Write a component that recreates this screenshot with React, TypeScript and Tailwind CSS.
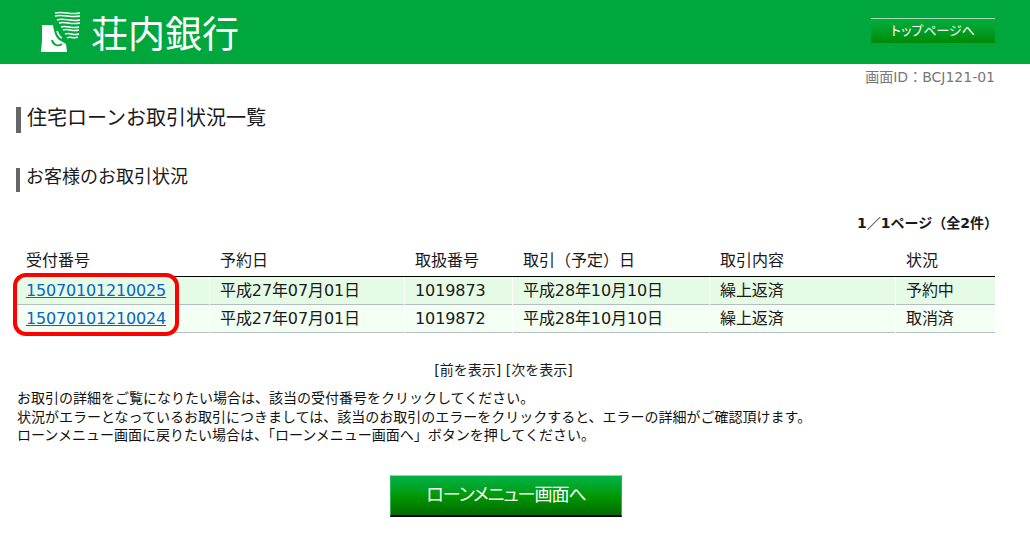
import React from "react";

const cols = "grid grid-cols-[192px_194px_107px_196px_185px_99px] gap-x-[1px] w-[978px]";
const rows = [
  ["15070101210025", "平成27年07月01日", "1019873", "平成28年10月10日", "繰上返済", "予約中"],
  ["15070101210024", "平成27年07月01日", "1019872", "平成28年10月10日", "繰上返済", "取消済"],
];
const heads = ["受付番号", "予約日", "取扱番号", "取引（予定）日", "取引内容", "状況"];
const pads = ["pl-[9px]", "pl-[10px]", "pl-[10px]", "pl-[10px]", "pl-[10px]", "pl-[10px]"];

function Logo() {
  return (
    <svg width="42" height="44" viewBox="0 0 42 44" className="shrink-0">
      <path d="M1 15H12C13 22 15 29 20 31L25 34L26 42H0L1 30Z" fill="#fff" />
      <path d="M11 30C12 35 17 37 21 34" fill="none" stroke="#00a73c" strokeWidth="1.8" />
      <path d="M16 21C17 24 18 27 21 28" fill="none" stroke="#fff" strokeWidth="1.8" />
      <g fill="none" stroke="#fff" strokeWidth="1.5">
        <path d="M14 3C22 1 30 5 39 3" />
        <path d="M14 6C22 4 30 8 39 6" />
        <path d="M16 10C22 7 30 12 39 10" />
        <path d="M18 13C24 11 30 15 39 13" />
        <path d="M20 17C25 15 31 19 38 17" />
        <path d="M22 20C27 18 31 22 38 20" />
        <path d="M24 24C28 22 32 26 38 24" />
        <path d="M26 28C29 26 33 29 37 27" />
      </g>
    </svg>
  );
}

export default function App() {
  return (
    <div className="w-[1030px] h-[538px] bg-white overflow-hidden text-[16px] leading-[20px] text-[#1a1a1a] font-['DejaVu_Sans','Noto_Sans_CJK_JP',sans-serif]">
      <header className="h-[64px] bg-[#00a73c] flex items-center justify-between pl-[41px] pr-[35px]">
        <div className="flex items-center gap-[8px]">
          <Logo />
          <span className="text-white text-[37px] leading-[44px] font-normal font-['Noto_Sans_CJK_JP',sans-serif]">荘内銀行</span>
        </div>
        <button className="w-[124px] h-[25px] mt-[-4px] border-t border-[#a9dcb6] bg-gradient-to-b from-[#00b03c] to-[#008a00] text-white text-[13px] leading-[20px] text-center [font-feature-settings:'palt']">
          トップページへ
        </button>
      </header>
      <main className="pl-[17px] pr-[17px]">
        <div className="text-right text-[#777] text-[14px] leading-[18px] mt-[4px] pr-[18px]">画面ID：BCJ121-01</div>
        <h1 className="mt-[21px] ml-[-1px] h-[26px] border-l-[5px] border-[#666] pl-[6px] text-[20px] leading-[22px] font-normal">住宅ローンお取引状況一覧</h1>
        <h2 className="mt-[35px] ml-[-1px] h-[24px] border-l-[4px] border-[#666] pl-[6px] text-[18px] leading-[18px] font-normal">お客様のお取引状況</h2>
        <div className="mt-[21px] text-right text-[14px] leading-[20px] font-bold pr-[15px]">1／1ページ（全2件）</div>
        <div className="relative mt-[11px] w-[978px]">
          <div className={`${cols} h-[33px] border-b border-black`}>
            {heads.map((h, j) => (
              <div key={h} className={`${pads[j]} pt-[7px]`}>{h}</div>
            ))}
          </div>
          {rows.map((r, i) => (
            <div key={r[0]} className={`${cols} h-[28px]`}>
              {r.map((c, j) => (
                <div key={j} className={`${pads[j]} pt-[4px] border-b border-[#b5bdc4] tracking-[-0.1px] ${i === 0 ? "bg-[#e6fbe6]" : "bg-[#f3fff3]"}`}>
                  {j === 0 ? <a href="#" className="text-[#0d62c6] underline tracking-[-0.18px]">{c}</a> : c}
                </div>
              ))}
            </div>
          ))}
          <div className="absolute left-[-4px] top-[29px] w-[166px] h-[63px] border-[4px] border-[#ff0000] rounded-[13px]" />
        </div>
        <p className="mt-[27px] text-center text-[14px] leading-[20px] pr-[23px]">[前を表示] [次を表示]</p>
        <div className="mt-[9px] text-[14px] leading-[18.5px] text-[#111]">
          <p>お取引の詳細をご覧になりたい場合は、該当の受付番号をクリックしてください。</p>
          <p>状況がエラーとなっているお取引につきましては、該当のお取引のエラーをクリックすると、エラーの詳細がご確認頂けます。</p>
          <p>ローンメニュー画面に戻りたい場合は、「ローンメニュー画面へ」ボタンを押してください。</p>
        </div>
        <div className="mt-[30px] flex justify-center pr-[18px]">
          <button className="w-[232px] h-[42px] border border-[#33b05a] border-t-[#8fdca8] border-b-2 border-b-black bg-gradient-to-b from-[#00b343] via-[#009a00] to-[#006a00] text-white text-[18px] leading-[24px] tracking-[-1px] [font-feature-settings:'palt']">
            ローンメニュー画面へ
          </button>
        </div>
      </main>
    </div>
  );
}
